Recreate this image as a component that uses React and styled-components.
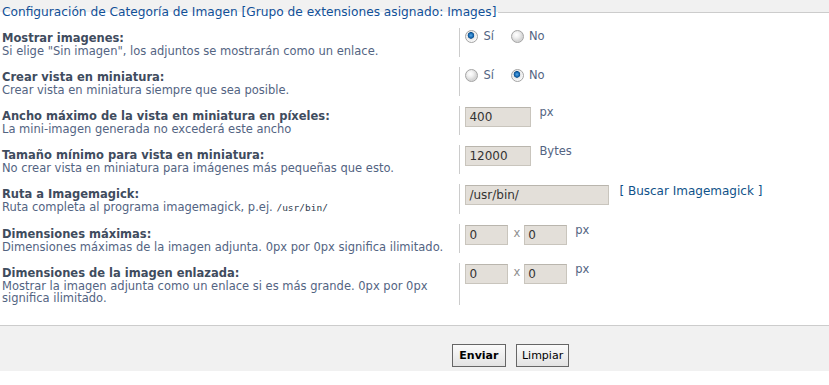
import React from 'react';
import styled, { createGlobalStyle } from 'styled-components';

const GlobalStyle = createGlobalStyle`
  html, body {
    margin: 0;
    padding: 0;
    background: #ffffff;
    overflow: hidden;
  }
  body {
    font-family: "DejaVu Sans", Verdana, sans-serif;
    font-size: 11.5px;
    color: #536482;
  }
`;

const Viewport = styled.div`
  width: 100%;
  overflow: hidden;
`;

const Panel = styled.div`
  width: 1021px;
  background: #f1f1f1;
  padding-top: 4px;
`;

const Fieldset = styled.fieldset`
  margin: 0;
  padding: 8px 0 20px;
  border: none;
  border-top: 1px solid #cccccc;
  background: #ffffff;
  min-width: 0;
`;

const Legend = styled.legend`
  padding: 0 2px;
  margin: 0;
  font-family: Tahoma, "DejaVu Sans", sans-serif;
  font-size: 12.2px;
  line-height: 16px;
  color: #115098;
`;

const Row = styled.div`
  display: flex;
  align-items: stretch;
  margin-bottom: 10px;

  &:last-child {
    margin-bottom: 0;
  }
`;

const Label = styled.div`
  width: 45%;
  padding: 4px 0 0 2px;
  box-sizing: border-box;
  line-height: 12.5px;
`;

const Title = styled.div`
  font-weight: bold;
  color: #3f4c5e;
`;

const Explain = styled.div`
  color: #536482;
`;

const Code = styled.code`
  font-family: "DejaVu Sans Mono", monospace;
  font-size: 9.5px;
  color: #2e3a4d;
`;

const Field = styled.div`
  flex: 1;
  display: flex;
  align-items: flex-start;
  border-left: 1px solid #cccccc;
  padding-left: 5px;
  line-height: 13px;
`;

const RadioLabel = styled.label`
  display: flex;
  align-items: center;
  gap: 5px;
  margin: 2px 17px 0 0;
  color: #536482;
`;

const Radio = styled.span`
  display: inline-block;
  width: 11px;
  height: 11px;
  border-radius: 50%;
  border: 1px solid #a4a4a4;
  background: ${(p) =>
    p.$checked
      ? 'radial-gradient(circle at 45% 40%, #5aa9e6 0, #1c6fb8 2px, #0d4f8c 3px, #e8e8e8 3.6px, #f7f7f7 6px)'
      : 'radial-gradient(circle at 40% 35%, #ffffff 0, #f0f0f0 3px, #d6d6d6 6px)'};
`;

const Input = styled.input`
  width: ${(p) => p.$width}px;
  height: 20px;
  box-sizing: border-box;
  margin: 1px 0 0;
  padding: 2px 3px;
  border: 1px solid #c9c5bd;
  border-top-color: #b9b5ad;
  background: #e3dfd9;
  font-family: "DejaVu Sans", Verdana, sans-serif;
  font-size: 12px;
  color: #333333;
  outline: none;
`;

const Unit = styled.span`
  margin-left: 8px;
  color: #536482;
`;

const Times = styled.span`
  margin: 3px 4px 0 5px;
  color: #8f8f8f;
`;

const Link = styled.a`
  margin: 1px 0 0 10px;
  font-size: 12px;
  color: #105289;
  text-decoration: none;
`;

const Submit = styled.div`
  border-top: 1px solid #cccccc;
  padding: 18px 0 4px;
  display: flex;
  justify-content: center;
  gap: 10px;
`;

const Button = styled.button`
  height: 23px;
  padding: 0 ${(p) => (p.$primary ? '6.5px' : '5px')};
  border: 1px solid #666666;
  background: linear-gradient(#fbfbfb, #e3e3e3);
  font-family: Tahoma, "DejaVu Sans", sans-serif;
  font-size: 11px;
  font-weight: ${(p) => (p.$primary ? 'bold' : 'normal')};
  color: #000000;
`;

const settings = [
  {
    title: 'Mostrar imagenes:',
    explain: 'Si elige "Sin imagen", los adjuntos se mostrarán como un enlace.',
    kind: 'radio',
    value: 'yes',
  },
  {
    title: 'Crear vista en miniatura:',
    explain: 'Crear vista en miniatura siempre que sea posible.',
    kind: 'radio',
    value: 'no',
  },
  {
    title: 'Ancho máximo de la vista en miniatura en píxeles:',
    explain: 'La mini-imagen generada no excederá este ancho',
    kind: 'text',
    value: '400',
    unit: 'px',
  },
  {
    title: 'Tamaño mínimo para vista en miniatura:',
    explain: 'No crear vista en miniatura para imágenes más pequeñas que esto.',
    kind: 'text',
    value: '12000',
    unit: 'Bytes',
  },
  {
    title: 'Ruta a Imagemagick:',
    explain: (
      <>
        Ruta completa al programa imagemagick, p.ej. <Code>/usr/bin/</Code>
      </>
    ),
    kind: 'path',
    value: '/usr/bin/',
  },
  {
    title: 'Dimensiones máximas:',
    explain: 'Dimensiones máximas de la imagen adjunta. 0px por 0px significa ilimitado.',
    kind: 'dims',
  },
  {
    title: 'Dimensiones de la imagen enlazada:',
    explain:
      'Mostrar la imagen adjunta como un enlace si es más grande. 0px por 0px significa ilimitado.',
    kind: 'dims',
  },
];

const renderField = (s) => {
  if (s.kind === 'radio') {
    return (
      <>
        <RadioLabel>
          <Radio $checked={s.value === 'yes'} />
          Sí
        </RadioLabel>
        <RadioLabel>
          <Radio $checked={s.value === 'no'} />
          No
        </RadioLabel>
      </>
    );
  }
  if (s.kind === 'text') {
    return (
      <>
        <Input $width={66} defaultValue={s.value} />
        <Unit>{s.unit}</Unit>
      </>
    );
  }
  if (s.kind === 'path') {
    return (
      <>
        <Input $width={144} defaultValue={s.value} />
        <Link href="#">[ Buscar Imagemagick ]</Link>
      </>
    );
  }
  return (
    <>
      <Input $width={43} defaultValue="0" />
      <Times>x</Times>
      <Input $width={43} defaultValue="0" />
      <Unit>px</Unit>
    </>
  );
};

const App = () => (
  <Viewport>
    <GlobalStyle />
    <Panel>
      <Fieldset>
        <Legend>Configuración de Categoría de Imagen [Grupo de extensiones asignado: Images]</Legend>
        {settings.map((s) => (
          <Row key={s.title}>
            <Label>
              <Title>{s.title}</Title>
              <Explain>{s.explain}</Explain>
            </Label>
            <Field>{renderField(s)}</Field>
          </Row>
        ))}
      </Fieldset>
      <Submit>
        <Button $primary>Enviar</Button>
        <Button>Limpiar</Button>
      </Submit>
    </Panel>
  </Viewport>
);

export default App;
